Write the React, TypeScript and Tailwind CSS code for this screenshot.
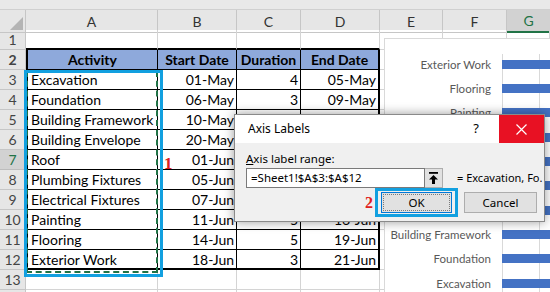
const data = [
  ["Excavation", "01-May", "4", "05-May"],
  ["Foundation", "06-May", "3", "09-May"],
  ["Building Framework", "10-May", "10", "20-May"],
  ["Building Envelope", "20-May", "12", "01-Jun"],
  ["Roof", "01-Jun", "4", "05-Jun"],
  ["Plumbing Fixtures", "05-Jun", "2", "07-Jun"],
  ["Electrical Fixtures", "07-Jun", "4", "11-Jun"],
  ["Painting", "11-Jun", "5", "16-Jun"],
  ["Flooring", "14-Jun", "5", "19-Jun"],
  ["Exterior Work", "18-Jun", "3", "21-Jun"],
];

const chartLabels = [
  "Exterior Work",
  "Flooring",
  "Painting",
  "Electrical Fixtures",
  "Plumbing Fixtures",
  "Roof",
  "Building Envelope",
  "Building Framework",
  "Foundation",
  "Excavation",
];

const grid = "grid grid-cols-[26px_132px_79px_64px_79px_63px_64px_43px]";
const blank = "h-[20px] border-r border-b border-[#d4d4d4]";

function RowHead({ n }: { n: number }) {
  const cls =
    n === 7
      ? "h-[20px] flex items-center justify-center border-r border-b border-[#bdbdbd] bg-[#d2d2d2] text-[#217346] text-[14px]"
      : "h-[20px] flex items-center justify-center border-r border-b border-[#c6c6c6] bg-[#e6e6e6] text-[#444] text-[14px]";
  return <div className={cls}>{n}</div>;
}

function Tail() {
  return (
    <>
      <div className={blank} />
      <div className={blank} />
      <div className={blank} />
    </>
  );
}

function Sheet() {
  return (
    <div className="flex flex-col">
      <div className="h-[10px] bg-[#e9e9e9] border-b border-[#d0d0d0]" />
      <div className={grid + " h-[20px] bg-[#e6e6e6] text-[14px] text-[#333]"}>
        <div className="relative border-r border-b border-[#c6c6c6]">
          <svg className="absolute right-[2px] bottom-[2px]" width="13" height="13" viewBox="0 0 13 13">
            <path d="M13 0 V13 H0 Z" fill="#b4b4b4" />
          </svg>
        </div>
        {["A", "B", "C", "D", "E", "F"].map((c) => (
          <div key={c} className="flex items-center justify-center border-r border-b border-[#c6c6c6]">
            {c}
          </div>
        ))}
        <div className="flex items-center justify-center bg-[#d2d2d2] border-b-2 border-[#217346] text-[#217346]">G</div>
      </div>

      {/* row 1 */}
      <div className={grid}>
        <RowHead n={1} />
        <div className="h-[20px] border-r border-r-[#d4d4d4] border-b-2 border-b-black" />
        <div className="h-[20px] border-r border-r-[#d4d4d4] border-b-2 border-b-black" />
        <div className="h-[20px] border-r border-r-[#d4d4d4] border-b-2 border-b-black" />
        <div className="h-[20px] border-r border-r-[#d4d4d4] border-b-2 border-b-black" />
        <Tail />
      </div>

      {/* row 2: table header */}
      <div className={grid + " text-[14px] font-bold text-black"}>
        <RowHead n={2} />
        <div className="h-[20px] flex items-center justify-center border-l-2 border-r border-b border-black bg-[#8ea9db]">Activity</div>
        <div className="h-[20px] flex items-center justify-center border-r border-b border-black bg-[#8ea9db]">Start Date</div>
        <div className="h-[20px] flex items-center justify-center border-r border-b border-black bg-[#8ea9db]">Duration</div>
        <div className="h-[20px] flex items-center justify-center border-r-2 border-b border-black bg-[#8ea9db]">End Date</div>
        <Tail />
      </div>

      {data.map((r, i) => {
        const last = i === data.length - 1;
        return (
          <div key={r[0]} className={grid + " text-[14px] text-black"}>
            <RowHead n={i + 3} />
            <div
              className={
                last
                  ? "h-[20px] flex items-center pl-[3px] border-l-2 border-r border-b-2 border-black whitespace-nowrap"
                  : "h-[20px] flex items-center pl-[3px] border-l-2 border-r border-b border-black whitespace-nowrap"
              }
            >
              {r[0]}
            </div>
            <div className={last ? "h-[20px] flex items-center justify-end pr-[2px] border-r border-b-2 border-black" : "h-[20px] flex items-center justify-end pr-[2px] border-r border-b border-black"}>
              {r[1]}
            </div>
            <div className={last ? "h-[20px] flex items-center justify-end pr-[2px] border-r border-b-2 border-black" : "h-[20px] flex items-center justify-end pr-[2px] border-r border-b border-black"}>
              {r[2]}
            </div>
            <div className={last ? "h-[20px] flex items-center justify-end pr-[2px] border-r-2 border-b-2 border-black" : "h-[20px] flex items-center justify-end pr-[2px] border-r-2 border-b border-black"}>
              {r[3]}
            </div>
            <Tail />
          </div>
        );
      })}

      {[13, 14].map((n) => (
        <div key={n} className={grid}>
          <RowHead n={n} />
          <div className={blank} />
          <div className={blank} />
          <div className={blank} />
          <div className={blank} />
          <Tail />
        </div>
      ))}
    </div>
  );
}

function Chart() {
  return (
    <div className="absolute left-[384px] top-[38px] w-[200px] h-[300px] bg-white border border-[#d9d9d9]">
      <div className="absolute left-[117px] top-[15px] bottom-0 w-px bg-[#d9d9d9]" />
      <div className="absolute left-[154px] top-[15px] bottom-0 w-px bg-[#d9d9d9]" />
      <div className="relative flex flex-col pt-[13px]">
        {chartLabels.map((l) => (
          <div key={l} className="h-[24.35px] flex items-center">
            <div className="w-[106px] text-right text-[11.5px] text-[#595959] whitespace-nowrap">{l}</div>
            <div className="ml-[11px] h-[9px] flex-1 bg-[#4472c4]" />
          </div>
        ))}
      </div>
    </div>
  );
}

function Dialog() {
  return (
    <div className="absolute left-[234px] top-[114px] w-[311px] h-[108px] flex flex-col border border-[#8a8a8a] bg-[#f0f0f0] shadow-[0_0_10px_rgba(0,0,0,0.4)] font-['Noto_Sans',sans-serif] text-[11.5px] text-black">
      <div className="h-[28px] flex items-center bg-white">
        <span className="pl-[13px] text-[12px]">Axis Labels</span>
        <span className="ml-auto mr-[20px] text-[13px]">?</span>
        <div className="w-[45px] h-full flex items-center justify-center bg-[#e81123]">
          <svg width="11" height="11" viewBox="0 0 11 11">
            <path d="M0.5 0.5 L10.5 10.5 M10.5 0.5 L0.5 10.5" stroke="#fff" strokeWidth="1.2" />
          </svg>
        </div>
      </div>
      <div className="flex flex-col pl-[11px] pr-[7px] pt-[9px]">
        <div className="h-[14px] leading-[14px]">
          <span className="underline">A</span>xis label range:
        </div>
        <div className="mt-[2px] flex items-center">
          <div className="shrink-0 w-[179px] h-[20px] flex items-center pl-[4px] bg-white border border-[#7a7a7a]">
            =Sheet1!$A$3:$A$12
          </div>
          <div className="shrink-0 w-[18px] h-[20px] flex items-center justify-center bg-[#e1e1e1] border border-l-0 border-[#adadad]">
            <svg width="11" height="12" viewBox="0 0 11 12">
              <rect x="1" y="0" width="9" height="1.8" fill="#000" />
              <path d="M5.5 3 L10 7.5 H7 V12 H4 V7.5 H1 Z" fill="#000" />
            </svg>
          </div>
          <span className="shrink-0 ml-[14px] whitespace-nowrap text-[11px]">= Excavation, Fo.</span>
        </div>
        <div className="flex items-center justify-end">
          <span className="mr-[2px] font-['Liberation_Serif',serif] font-bold text-[16px] text-[#e02020]">2</span>
          <div className="px-[3px] py-[1px] border-[3px] border-[#12a0e0]">
            <div className="w-[71px] h-[21px] flex items-center justify-center bg-[#e1e1e1] border border-[#0078d7]">
              <div className="w-[67px] h-[17px] flex items-center justify-center border border-dotted border-[#7a7a7a]">OK</div>
            </div>
          </div>
          <div className="ml-[6px] w-[73px] h-[21px] flex items-center justify-center bg-[#e1e1e1] border border-[#adadad]">Cancel</div>
        </div>
      </div>
    </div>
  );
}

export default function App() {
  return (
    <div className="relative w-[550px] h-[292px] overflow-hidden bg-white font-['Lato',sans-serif]">
      <Sheet />
      {/* copy marquee and highlight */}
      <div className="absolute left-[26px] top-[71px] w-[132px] h-[202px] border-2 border-dashed border-[#217346]" />
      <div className="absolute left-[24px] top-[70px] w-[139px] h-[207px] border-[3px] border-[#12a0e0]" />
      <span className="absolute left-[164px] top-[151px] font-['Liberation_Serif',serif] font-bold text-[17px] text-[#e02020]">1</span>
      <Chart />
      <Dialog />
    </div>
  );
}
